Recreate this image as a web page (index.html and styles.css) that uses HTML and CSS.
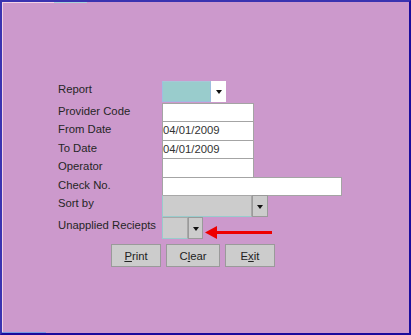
FILE: index.html
```html
<!DOCTYPE html>
<html>
<head>
<meta charset="utf-8">
<link rel="stylesheet" href="styles.css">
</head>
<body>
<div class="frame">
  <div class="form">
    <div class="row r22">
      <span class="label">Report</span>
      <div class="combo">
        <div class="combo-box teal w49"></div>
        <div class="combo-btn white"><span class="tri"></span></div>
      </div>
    </div>
    <div class="row r18">
      <span class="label">Provider Code</span>
      <div class="field w92"></div>
    </div>
    <div class="row r19">
      <span class="label">From Date</span>
      <div class="field w92">04/01/2009</div>
    </div>
    <div class="row r18">
      <span class="label">To Date</span>
      <div class="field w92">04/01/2009</div>
    </div>
    <div class="row r19">
      <span class="label">Operator</span>
      <div class="field w92"></div>
    </div>
    <div class="row r18">
      <span class="label">Check No.</span>
      <div class="field w180"></div>
    </div>
    <div class="row r22">
      <span class="label">Sort by</span>
      <div class="combo">
        <div class="combo-box gray w90"></div>
        <div class="combo-btn grey"><span class="tri"></span></div>
      </div>
    </div>
    <div class="row r22">
      <span class="label">Unapplied Reciepts</span>
      <div class="combo">
        <div class="combo-box gray w26"></div>
        <div class="combo-btn grey w15"><span class="tri"></span></div>
      </div>
      <svg class="red-arrow" width="68" height="14" viewBox="0 0 68 14">
        <polygon points="0,6.5 12,0 12,13" fill="#ee0000"/>
        <rect x="11" y="5" width="56" height="3" fill="#ee0000"/>
      </svg>
    </div>
    <div class="buttons">
      <button class="btn w50"><u>P</u>rint</button>
      <button class="btn w54">C<u>l</u>ear</button>
      <button class="btn w50">E<u>x</u>it</button>
    </div>
  </div>
</div>
</body>
</html>
```

FILE: styles.css
```css
html, body {
  margin: 0;
  padding: 0;
}
body {
  font-family: "Liberation Sans", Arial, sans-serif;
  font-size: 11.3px;
}
.frame {
  box-sizing: border-box;
  width: 411px;
  height: 335px;
  border-style: solid;
  border-width: 2px;
  border-color: #3a33b0 #1c0c9c #1c0c9c #3a33b0;
  background:
    linear-gradient(to right, #f3d3e6 0 52px, #a9d2d8 52px 85px, transparent 85px) top left / 100% 1px no-repeat,
    linear-gradient(to right, #7a9ae0 0 44px, transparent 44px) bottom left / 100% 1px no-repeat,
    linear-gradient(to bottom, #f3d3e6 0 100%) top left / 1px 100% no-repeat,
    #cc99cc;
  padding: 79px 0 0 56px;
}
.form {
  display: flex;
  flex-direction: column;
}
.row {
  display: flex;
  align-items: flex-start;
}
.r22 { height: 22px; }
.r18 { height: 18px; }
.r19 { height: 19px; }
.label {
  width: 104px;
  color: #262626;
  line-height: 14px;
  padding-top: 1px;
  white-space: nowrap;
}
.field {
  box-sizing: border-box;
  height: calc(100% + 1px);
  background: #fff;
  border: 1px solid #a4a4a4;
  color: #333;
  line-height: 16px;
  padding-left: 0;
  white-space: nowrap;
}
.w92 { width: 92px; }
.w180 { width: 180px; }
.w49 { width: 49px; }
.w90 { width: 90px; }
.w26 { width: 26px; }
.w15 { width: 15px; }
.w50 { width: 50px; }
.w54 { width: 54px; }
.combo {
  display: flex;
  height: 22px;
}
.combo-box {
  box-sizing: border-box;
  height: 100%;
}
.combo-box.teal {
  height: 21px;
  background: #99cccc;
  border: 1px solid #9cbfe0;
  border-top-color: #a6c8d8;
}
.combo-box.gray {
  background: #cccccc;
  border: 1px solid #a8a8a8;
  border-bottom-color: #9cc;
  border-left-color: #9cc;
}
.combo-btn {
  box-sizing: border-box;
  width: 16px;
  height: 100%;
  display: flex;
  align-items: center;
  justify-content: center;
}
.combo-btn.white {
  height: 21px;
  width: 15px;
  background: #fff;
}
.combo-btn.grey {
  background: #cccccc;
  border: 1px solid #9a9a9a;
}
.combo-btn.grey.w15 { width: 15px; }
.tri {
  width: 0;
  height: 0;
  border-left: 3.5px solid transparent;
  border-right: 3.5px solid transparent;
  border-top: 4px solid #111;
  margin-top: 1px;
}
.red-arrow {
  display: block;
  margin-left: 2px;
  margin-top: 9px;
}
.buttons {
  display: flex;
  gap: 5px;
  margin-top: 5px;
  margin-left: 53px;
}
.btn {
  box-sizing: border-box;
  height: 23px;
  background: #cccccc;
  border: 1px solid #9a9a9a;
  font-family: "Liberation Sans", Arial, sans-serif;
  font-size: 11.3px;
  color: #222;
  padding: 0;
  margin: 0;
}
.btn u {
  text-decoration: underline;
  text-underline-offset: 1px;
}
```
